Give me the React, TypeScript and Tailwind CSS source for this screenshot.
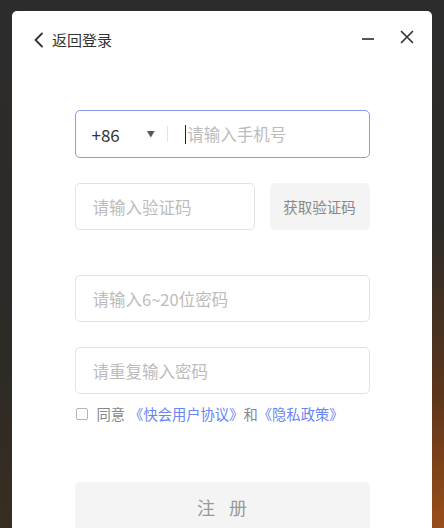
import { useState } from "react";

const font = { fontFamily: '"Noto Sans CJK SC", "Noto Sans", sans-serif' };

const BackIcon = () => (
  <svg width="11" height="16" viewBox="0 0 11 16" fill="none">
    <path d="M9 1.5 2.5 8 9 14.5" stroke="#333" strokeWidth="1.8" strokeLinecap="round" strokeLinejoin="round" />
  </svg>
);

const CloseIcon = () => (
  <svg width="14" height="14" viewBox="0 0 14 14" fill="none">
    <path d="M1.5 1.5 12.5 12.5M12.5 1.5 1.5 12.5" stroke="#333" strokeWidth="1.7" strokeLinecap="round" />
  </svg>
);

const App = () => {
  const [agree, setAgree] = useState(false);

  return (
    <div
      className="h-[528px] w-[444px] overflow-hidden px-[12px] pt-[11px] bg-[radial-gradient(ellipse_at_100%_100%,#9a4e1a_0%,rgba(120,60,20,0.6)_18%,transparent_40%),linear-gradient(to_bottom,#2c2c2c,#2e2b26_70%,#382d20)]"
      style={font}
    >
      <div className="w-[420px] min-h-[540px] bg-white rounded-[5px] flex flex-col">
        {/* title bar */}
        <div className="mt-[20px] h-[18px] flex items-center pl-[21px] pr-[18px]">
          <BackIcon />
          <span className="ml-[8px] text-[15px] leading-none text-[#333] mt-[-2px]">返回登录</span>
          <div className="flex-1" />
          <div className="w-[12px] h-[2px] bg-[#555] mr-[26px] mt-[-3px]" />
          <div className="mt-[-6px]">
            <CloseIcon />
          </div>
        </div>

        <div className="w-[295px] mx-auto flex flex-col">
          {/* phone */}
          <div className="mt-[61px] h-[48px] rounded-[5px] border-[1.5px] border-[#8a9bf3] flex items-center pl-[16px]">
            <span className="text-[17px] text-[#333] leading-none">+86</span>
            <span className="ml-[27px] text-[8px] text-[#555] leading-none">▼</span>
            <div className="ml-[12px] w-px h-[16px] bg-[#e3e3e3]" />
            <div className="ml-[17px] w-[1.5px] h-[19px] bg-[#222]" />
            <input
              className="ml-[1px] flex-1 min-w-0 outline-none text-[16.5px] text-[#333] placeholder:text-[#bcbcbc] bg-transparent"
              placeholder="请输入手机号"
            />
          </div>

          {/* code */}
          <div className="mt-[25px] flex gap-[15px]">
            <input
              className="w-[180px] h-[47px] rounded-[5px] border border-[#e2e2e2] px-[17px] outline-none text-[16.5px] text-[#333] placeholder:text-[#bcbcbc]"
              placeholder="请输入验证码"
            />
            <button className="flex-1 h-[47px] rounded-[5px] bg-[#f4f4f4] text-[14.5px] text-[#888]">
              获取验证码
            </button>
          </div>

          {/* password */}
          <input
            type="password"
            className="mt-[45px] h-[47px] rounded-[5px] border border-[#e2e2e2] px-[17px] outline-none text-[16.5px] text-[#333] placeholder:text-[#bcbcbc]"
            placeholder="请输入6~20位密码"
          />
          <input
            type="password"
            className="mt-[25px] h-[47px] rounded-[5px] border border-[#e2e2e2] px-[17px] outline-none text-[16.5px] text-[#333] placeholder:text-[#bcbcbc]"
            placeholder="请重复输入密码"
          />

          {/* agreement */}
          <div className="mt-[10px] h-[20px] flex items-center text-[14.3px] leading-none">
            <button
              onClick={() => setAgree(!agree)}
              className={`ml-[1px] w-[12px] h-[12px] rounded-[2px] border ${agree ? "border-[#6a84f5] bg-[#6a84f5]" : "border-[#b5b5b5] bg-white"}`}
            />
            <span className="ml-[9px] text-[#888]">同意</span>
            <span className="ml-[4px] text-[#6a84f5]">《快会用户协议》</span>
            <span className="text-[#888]">和</span>
            <span className="text-[#6a84f5]">《隐私政策》</span>
          </div>

          {/* register */}
          <button className="mt-[58px] h-[50px] rounded-[5px] bg-[#f4f4f4] text-[18px] text-[#999] tracking-[14px] pl-[14px]">
            注册
          </button>
        </div>
      </div>
    </div>
  );
};

export default App;
